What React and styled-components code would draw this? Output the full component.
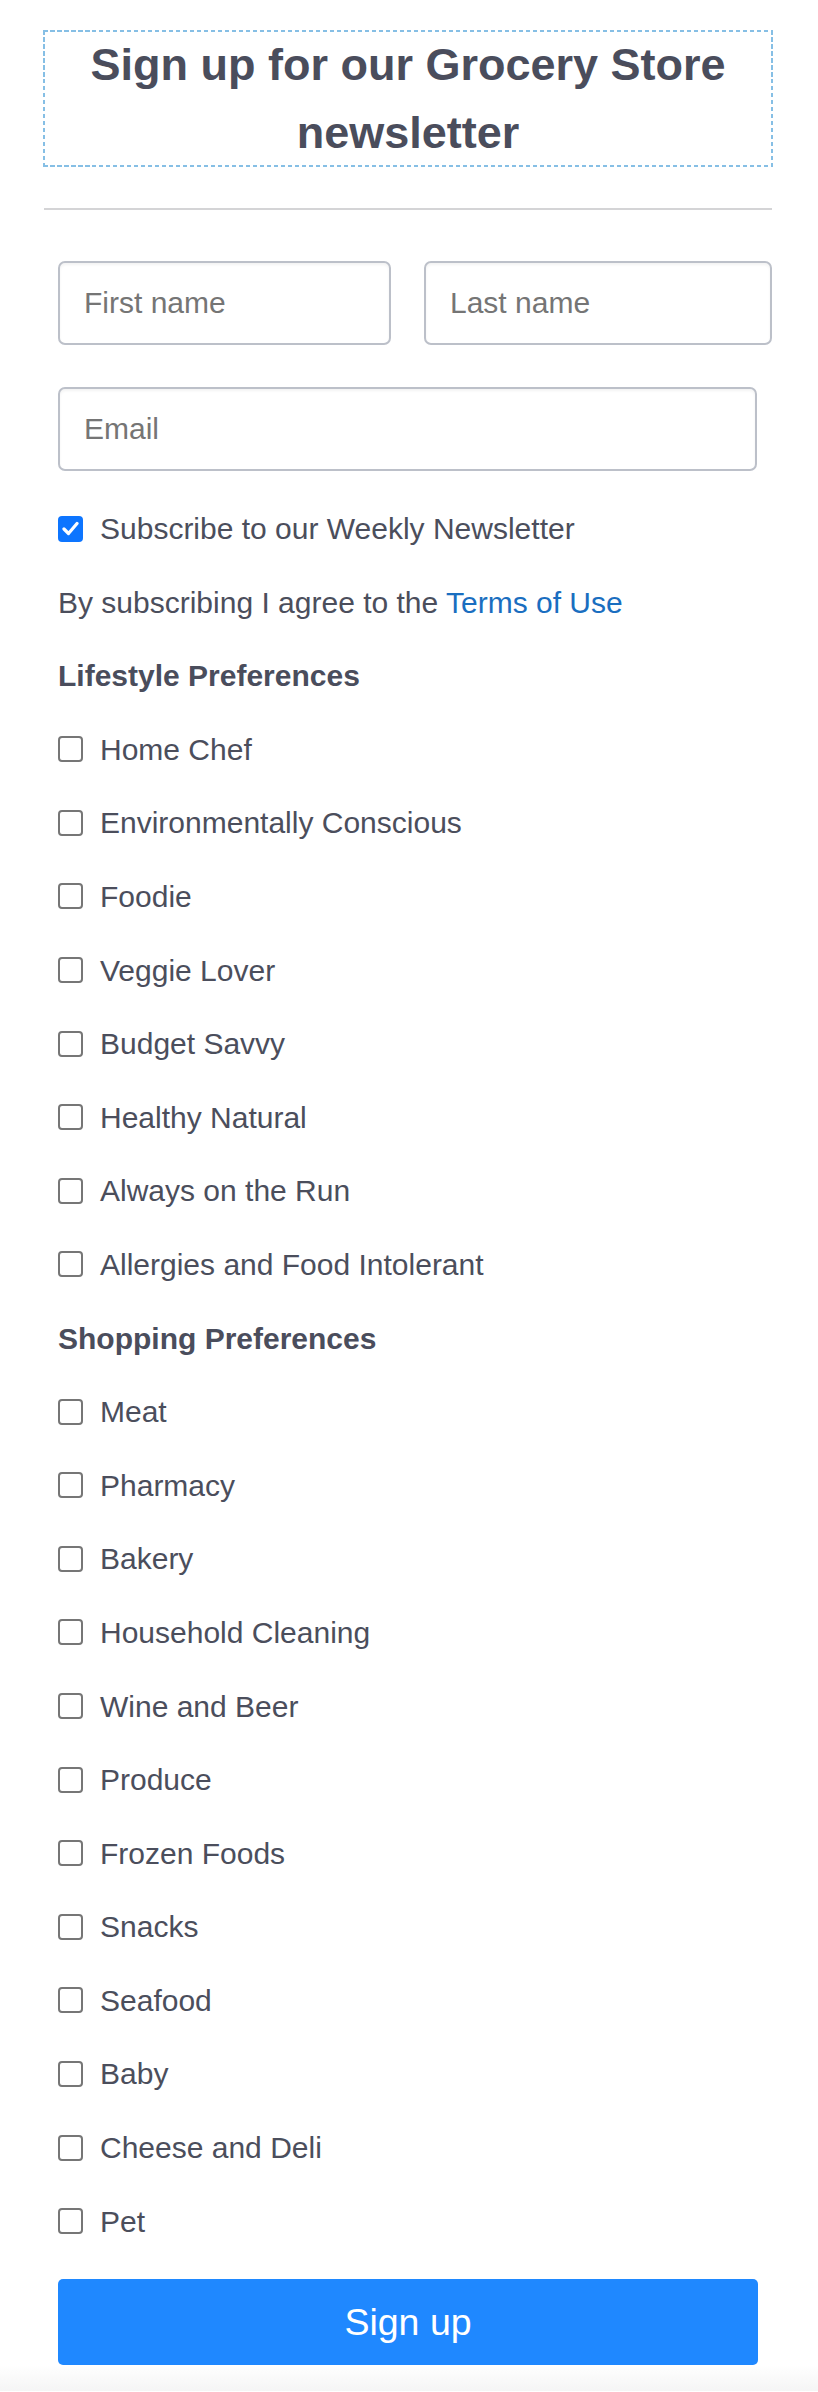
import React, { useState } from "react";
import styled, { createGlobalStyle } from "styled-components";

const GlobalStyle = createGlobalStyle`
  html, body { margin: 0; padding: 0; background: #ffffff; }
  body {
    font-family: "Liberation Sans", Arial, Helvetica, sans-serif;
    color: #4b4e5c;
  }
  * { box-sizing: border-box; }
`;

const Page = styled.div`
  padding: 30px 45px 0 43px;
`;

const dashH = "repeating-linear-gradient(90deg, #86bfe5 0 4.5px, transparent 4.5px 7px)";
const dashV = "repeating-linear-gradient(180deg, #86bfe5 0 4.5px, transparent 4.5px 7px)";

const TitleBox = styled.div`
  padding: 1px;
  text-align: center;
  background:
    ${dashH} left top / 100% 2px no-repeat,
    ${dashH} left bottom / 100% 2px no-repeat,
    ${dashV} left top / 2px 100% no-repeat,
    ${dashV} right top / 2px 100% no-repeat;
`;

const Title = styled.h1`
  margin: 0;
  font-size: 45px;
  line-height: 1.5;
  font-weight: 700;
  color: #4a4d5c;
`;

const Divider = styled.hr`
  margin: 41px 1px 0;
  border: none;
  height: 2px;
  background: #d4d4d6;
`;

const Form = styled.form`
  padding: 51px 0 0 15px;
  display: flex;
  flex-direction: column;
`;

const NameRow = styled.div`
  display: grid;
  grid-template-columns: 333px 348px;
  column-gap: 33px;
`;

const TextInput = styled.input`
  display: block;
  width: ${(p) => p.$width || "100%"};
  height: 84px;
  margin-top: ${(p) => p.$mt || "0px"};
  padding: 0 24px;
  border: 2px solid #bcc0c9;
  border-radius: 7px;
  box-shadow: inset 0 2px 3px rgba(0, 0, 0, 0.05);
  font-family: inherit;
  font-size: 30px;
  color: #4b4e5c;
  background: #fff;
  outline: none;
  &::placeholder { color: #757575; }
`;

const Options = styled.div`
  margin-top: 35px;
  display: flex;
  flex-direction: column;
  gap: 28.6px;
`;

const CheckRow = styled.label`
  display: flex;
  align-items: center;
  gap: 17px;
  height: 45px;
  font-size: 30px;
  line-height: 45px;
  cursor: pointer;
`;

const HiddenInput = styled.input`
  position: absolute;
  opacity: 0;
  width: 0;
  height: 0;
  margin: 0;
`;

const Box = styled.span`
  flex: none;
  width: 25px;
  height: 26px;
  border-radius: 4px;
  border: ${(p) => (p.$checked ? "none" : "2px solid #767676")};
  background: ${(p) => (p.$checked ? "#0d75ff" : "#fff")};
  display: flex;
  align-items: center;
  justify-content: center;
`;

const Text = styled.p`
  margin: 0;
  font-size: 30px;
  line-height: 45px;
`;

const Link = styled.a`
  color: #1a6ec0;
  text-decoration: none;
`;

const SectionHeading = styled.h3`
  margin: 0;
  font-size: 30px;
  line-height: 45px;
  font-weight: 700;
  color: #4a4d5c;
`;

const SubmitButton = styled.button`
  margin-top: 35.6px;
  width: 700px;
  height: 86px;
  border: none;
  border-radius: 5px;
  background: #1f88ff;
  color: #ffffff;
  font-family: inherit;
  font-size: 37.5px;
  cursor: pointer;
`;

const Fade = styled.div`
  height: 26px;
  background: linear-gradient(#ffffff, #f5f5f5);
`;

function Check({ label, defaultChecked = false }) {
  const [checked, setChecked] = useState(defaultChecked);
  return (
    <CheckRow>
      <HiddenInput
        type="checkbox"
        checked={checked}
        onChange={(e) => setChecked(e.target.checked)}
      />
      <Box $checked={checked}>
        {checked && (
          <svg width="17" height="15" viewBox="0 0 17 15" aria-hidden="true">
            <path
              d="M2 8 L6.5 12.5 L15 2.5"
              fill="none"
              stroke="#ffffff"
              strokeWidth="3.2"
              strokeLinecap="round"
              strokeLinejoin="round"
            />
          </svg>
        )}
      </Box>
      <span>{label}</span>
    </CheckRow>
  );
}

const lifestyle = [
  "Home Chef",
  "Environmentally Conscious",
  "Foodie",
  "Veggie Lover",
  "Budget Savvy",
  "Healthy Natural",
  "Always on the Run",
  "Allergies and Food Intolerant",
];

const shopping = [
  "Meat",
  "Pharmacy",
  "Bakery",
  "Household Cleaning",
  "Wine and Beer",
  "Produce",
  "Frozen Foods",
  "Snacks",
  "Seafood",
  "Baby",
  "Cheese and Deli",
  "Pet",
];

export default function App() {
  return (
    <>
      <GlobalStyle />
      <Page>
        <TitleBox>
          <Title>Sign up for our Grocery Store newsletter</Title>
        </TitleBox>
        <Divider />
        <Form onSubmit={(e) => e.preventDefault()}>
          <NameRow>
            <TextInput type="text" placeholder="First name" />
            <TextInput type="text" placeholder="Last name" />
          </NameRow>
          <TextInput type="email" placeholder="Email" $width="699px" $mt="42px" />
          <Options>
            <Check label="Subscribe to our Weekly Newsletter" defaultChecked />
            <Text>
              By subscribing I agree to the <Link href="#">Terms of Use</Link>
            </Text>
            <SectionHeading>Lifestyle Preferences</SectionHeading>
            {lifestyle.map((l) => (
              <Check key={l} label={l} />
            ))}
            <SectionHeading>Shopping Preferences</SectionHeading>
            {shopping.map((s) => (
              <Check key={s} label={s} />
            ))}
          </Options>
          <SubmitButton type="submit">Sign up</SubmitButton>
        </Form>
      </Page>
      <Fade />
    </>
  );
}
